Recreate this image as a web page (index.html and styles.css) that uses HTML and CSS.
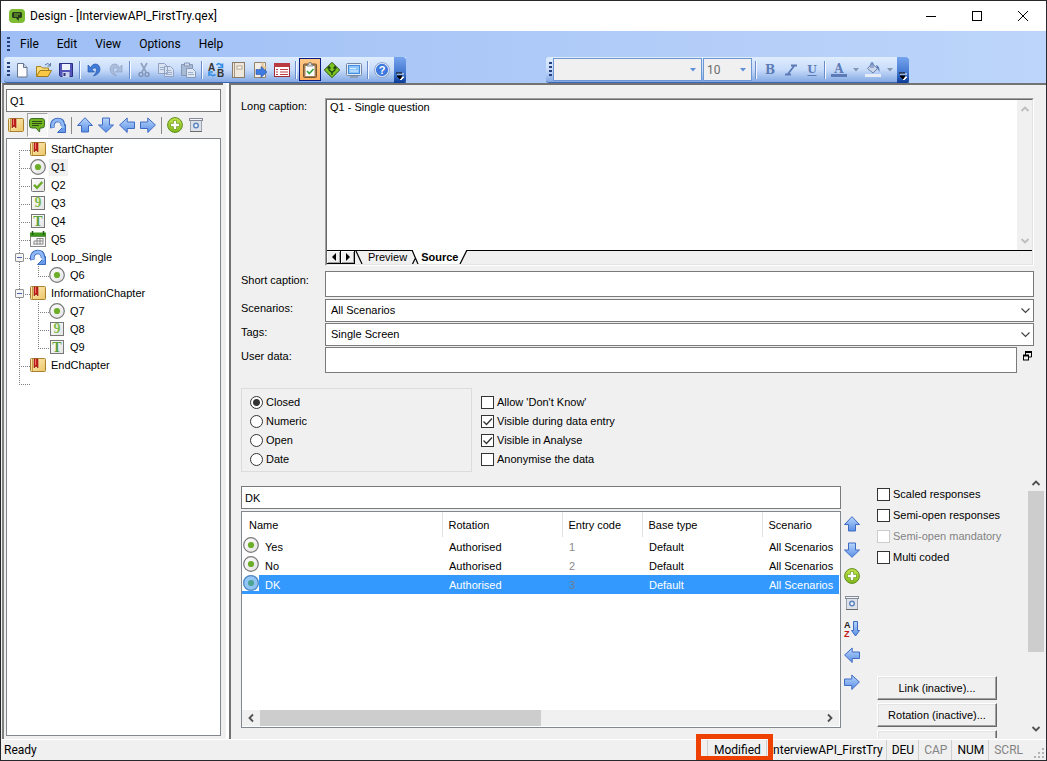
FILE: index.html
```html
<!DOCTYPE html>
<html lang="en">
<head>
<meta charset="utf-8">
<title>Design - [InterviewAPI_FirstTry.qex]</title>
<link rel="stylesheet" href="styles.css">
</head>
<body>
<svg class="defs" width="0" height="0" aria-hidden="true">
  <defs>
    <linearGradient id="gBlue" x1="0" y1="0" x2="0" y2="1"><stop offset="0" stop-color="#b9d6fb"/><stop offset="1" stop-color="#5a8fe6"/></linearGradient>
    <linearGradient id="gTan" x1="0" y1="0" x2="1" y2="1"><stop offset="0" stop-color="#fdf0c0"/><stop offset="1" stop-color="#ecc566"/></linearGradient>
    <linearGradient id="gGreen" x1="0" y1="0" x2="0" y2="1"><stop offset="0" stop-color="#c5e34e"/><stop offset="1" stop-color="#82b81c"/></linearGradient>
    <linearGradient id="gGray" x1="0" y1="0" x2="1" y2="1"><stop offset="0" stop-color="#ffffff"/><stop offset="1" stop-color="#e2e2e2"/></linearGradient>
  </defs>
  <symbol id="chapter" viewBox="0 0 16 16"><rect x=".5" y="1.500" width="15" height="13" rx="1" fill="url(#gTan)" stroke="#a9802f"/><path d="M2.500 2v12" stroke="#c99d45"/><path d="M4 2h4v9l-2-2-2 2z" fill="#c3201d" stroke="#8d1512" stroke-width=".6"/><path d="M5.500 2v6" stroke="#ee7a6a"/></symbol>
  <symbol id="bubble" viewBox="0 0 16 16"><path d="M3 1.500h10q2.500 0 2.500 2.500v4.500q0 2.500-2.500 2.500l-2 0-.5 4-3.500-4H3Q.5 11 .5 8.500V4Q.5 1.500 3 1.500z" fill="#6fb41f" stroke="#3f6d2a"/><path d="M3 4.500h10M3 6.500h10M3 8.500h7" stroke="#2e4d1b"/></symbol>
  <symbol id="loop" viewBox="0 0 16 16"><path d="M2.500 11C1.500 6 4 3 8 3c3.500 0 5 2.500 5 6" fill="none" stroke="#3b69bd" stroke-width="4.600"/><path d="M15.500 7.500v8H7.500z" fill="#6a9beb" stroke="#3b69bd" stroke-linejoin="round"/><path d="M2.600 10.500C1.600 6 4 3 8 3c3.500 0 5 2.500 5 8" fill="none" stroke="#8fb8f5" stroke-width="2.800"/></symbol>
  <symbol id="up" viewBox="0 0 16 16"><path d="M8 .7l7.500 7.800H11.500v6.500h-7V8.500H.5z" fill="url(#gBlue)" stroke="#3f6ac4" stroke-linejoin="round"/></symbol>
  <symbol id="down" viewBox="0 0 16 16"><path d="M8 15.300l7.500-7.300H11.500V1h-7v7H.5z" fill="url(#gBlue)" stroke="#3f6ac4" stroke-linejoin="round"/></symbol>
  <symbol id="left" viewBox="0 0 16 16"><path d="M.6 8l7.600-7v4h7.300v6.500H8.200v4z" fill="url(#gBlue)" stroke="#3f6ac4" stroke-linejoin="round"/></symbol>
  <symbol id="right" viewBox="0 0 16 16"><path d="M15.400 8l-7.600-7v4H.5v6.500h7.300v4z" fill="url(#gBlue)" stroke="#3f6ac4" stroke-linejoin="round"/></symbol>
  <symbol id="plus" viewBox="0 0 16 16"><circle cx="8" cy="8" r="7.400" fill="url(#gGreen)" stroke="#5d8d1d"/><path d="M8 3.500v9M3.500 8h9" stroke="#6d9c23" stroke-width="4"/><path d="M8 4v8M4 8h8" stroke="#fff" stroke-width="2.400"/></symbol>
  <symbol id="bin" viewBox="0 0 16 16"><path d="M2.500 3.500h11v11h-11z" fill="#dde1e9" stroke="#9da3ae"/><rect x="1.500" y="1.500" width="13" height="2" fill="#f4f5f8" stroke="#868c97"/><circle cx="8" cy="8.500" r="2.300" fill="#eef3fb" stroke="#5d83bd" stroke-width="1.400"/><path d="M2 14.500h12" stroke="#6b6b6b"/></symbol>
  <symbol id="single" viewBox="0 0 16 16"><circle cx="8" cy="8" r="7.300" fill="url(#gGray)" stroke="#777" stroke-width="1.200"/><circle cx="8" cy="8" r="3.100" fill="#6cae2a"/></symbol>
  <symbol id="multi" viewBox="0 0 16 16"><rect x="1.500" y="1.500" width="13" height="13" rx="1" fill="url(#gGray)" stroke="#777"/><path d="M4 7.800l3 3L12.300 5" fill="none" stroke="#69ab28" stroke-width="2.400"/></symbol>
  <symbol id="frame" viewBox="0 0 16 16"><rect x="1.500" y="1.500" width="13" height="13" fill="url(#gGray)" stroke="#777"/></symbol>
  <symbol id="date" viewBox="0 0 16 16"><rect x=".5" y="5.500" width="15" height="10" fill="#fafafa" stroke="#888"/><rect y="1.500" width="16" height="4" fill="#3e961d"/><path d="M2.500 0v4M13.500 0v4" stroke="#1e5f12" stroke-width="1.500"/><path d="M7 7.500h6M4 10h9M3.500 13h9.500M4 10v3.500M7 7v6.500M10 7v6.500M13 7v6.500" stroke="#888" fill="none"/></symbol>
  <symbol id="new" viewBox="0 0 16 16"><path d="M3.500 1.500h6l3.500 4v9.500h-9.500z" fill="#fdfdff" stroke="#66748f"/><path d="M9.500 1.500v4H13" fill="#cad6ec" stroke="#66748f"/></symbol>
  <symbol id="folder" viewBox="0 0 16 16"><path d="M9 3q3-3 5 0M14.500 1v3h-3" fill="none" stroke="#56789e"/><path d="M.5 14V4.500h4.500l1.500 1.500h6V9" fill="#f7dc7a" stroke="#ab8220"/><path d="M.5 14.500L4 8.500h11.500L12 14.500z" fill="#f9c846" stroke="#a3791b"/></symbol>
  <symbol id="save" viewBox="0 0 16 16"><path d="M1.500 1.500h13v13h-12l-1-1z" fill="#5254b8" stroke="#29307e"/><rect x="4" y="2" width="8" height="6" fill="#edf1fb"/><rect x="4.500" y="10" width="7" height="5" fill="#cbd2ee"/><rect x="5.500" y="11" width="2" height="3" fill="#30327a"/></symbol>
  <symbol id="undo" viewBox="0 0 16 16"><path d="M2 3v7h6.500L6 7.500Q10 4 10.500 8q0 3-3 6Q14 12 14 7 13.500 2 9 2 6.500 2 4.500 5.500z" fill="#3e7bd8" stroke="#285aac" stroke-width=".7"/></symbol>
  <symbol id="redo" viewBox="0 0 16 16"><path d="M14 3v7H7.500L10 7.500Q6 4 5.500 8q0 3 3 6Q2 12 2 7 2.500 2 7 2 9.500 2 11.500 5.500z" fill="#acbddb" stroke="#8da2c6" stroke-width=".7"/></symbol>
  <symbol id="cut" viewBox="0 0 16 16"><path d="M5 1l5 9M11 1L6 10" stroke="#8d9fbd" stroke-width="1.600"/><circle cx="5" cy="12.500" r="2" fill="none" stroke="#8497bb" stroke-width="1.500"/><circle cx="11" cy="12.500" r="2" fill="none" stroke="#8497bb" stroke-width="1.500"/></symbol>
  <symbol id="copy" viewBox="0 0 16 16"><path d="M.5 1.500h6l3 3v7h-9zM6.500 4.500h6l3 3v7h-9z" fill="#d8e2f2" stroke="#90a2c0"/><path d="M2 5.500h4M2 7.500h4M8 8.500h5M8 10.500h6M8 12.500h6" stroke="#9eafca"/></symbol>
  <symbol id="paste" viewBox="0 0 16 16"><path d="M1.500 2.500h11v11h-11z" fill="#a9bad4" stroke="#8597b6"/><path d="M4.500 1h5v3h-5z" fill="#d1dbea" stroke="#8597b6"/><path d="M6.500 6.500h6l3 3v6h-9z" fill="#e0e8f4" stroke="#8699b9"/><path d="M8 10.500h5M8 12.500h6" stroke="#9eafca"/></symbol>
  <symbol id="swap" viewBox="0 0 16 16"><path d="M8.500 3q3-3 5 1M14.500 1.500v4H10M7.500 12.500q-4 2.500-5-1M1 14v-4h4" fill="none" stroke="#368ee4" stroke-width="1.700"/></symbol>
  <symbol id="book" viewBox="0 0 16 16"><rect x="2.500" y=".5" width="12" height="15" fill="#eee8dc" stroke="#8b7a68"/><path d="M4.500 1v14" stroke="#a89884"/><rect x="7" y="4" width="5" height="3" fill="#fff" stroke="#b7a48c"/></symbol>
  <symbol id="export" viewBox="0 0 16 16"><path d="M2.500 .5h11v15h-11z" fill="#f3efe7" stroke="#93836d"/><path d="M10.500 .5v5h4" fill="none" stroke="#e1c28d" stroke-width="2"/><path d="M4 7.500h5V4.500l6 5.500-6 5.500v-3H4z" fill="#3d7be0" stroke="#2c55a4" stroke-width=".6"/></symbol>
  <symbol id="form" viewBox="0 0 16 16"><rect x=".5" y="1.500" width="15" height="13" fill="#fff" stroke="#a02b31"/><rect y="1" width="16" height="4" fill="#b93b40"/><path d="M2 7.500h2M6 7.500h8M2 10h2M6 10h8M2 12.500h2M6 12.500h8" stroke="#bc4146"/></symbol>
  <symbol id="clip" viewBox="0 0 16 16"><rect x="1.500" y="2" width="13" height="13.500" rx="1" fill="#a87f50" stroke="#725637"/><rect x="3.500" y="4" width="9" height="10" fill="#fff"/><path d="M5 4V2.500h1.500L7 .5h2l.5 2H11V4z" fill="#ddd" stroke="#666" stroke-width=".7"/><path d="M5 9l2.300 2.500L11.500 7" fill="none" stroke="#38a544" stroke-width="1.700"/></symbol>
  <symbol id="route" viewBox="0 0 16 16"><path d="M8 .3L15.700 8 8 15.700.3 8z" fill="#7cc51e" stroke="#34511b"/><path d="M8 13V10.500L5 8V5M8 10.500L11 8V5M3.500 6.500L5 4.500l1.500 2M9.500 6.500l1.500-2 1.500 2" fill="none" stroke="#1e3d13" stroke-width="1.200"/></symbol>
  <symbol id="screen" viewBox="0 0 16 16"><rect x=".5" y="1.500" width="15" height="12" rx="1" fill="#e3edf9" stroke="#75869e"/><rect x="2.500" y="3.500" width="11" height="8" fill="#8cc5fa" stroke="#438bdd"/><path d="M4 6.500h6M4 9h8" stroke="#d8edff"/><path d="M4 15h8" stroke="#8795a8" stroke-width="1.500"/></symbol>
  <symbol id="sup" viewBox="0 0 10 10"><path d="M1.500 7L5 3.500 8.500 7" fill="none" stroke="currentColor" stroke-width="1.800"/></symbol>
  <symbol id="sdown" viewBox="0 0 10 10"><path d="M1.500 3L5 6.500 8.500 3" fill="none" stroke="currentColor" stroke-width="1.800"/></symbol>
  <symbol id="sleft" viewBox="0 0 10 10"><path d="M7 1.500L3.500 5 7 8.500" fill="none" stroke="currentColor" stroke-width="1.800"/></symbol>
  <symbol id="sright" viewBox="0 0 10 10"><path d="M3 1.500L6.500 5 3 8.500" fill="none" stroke="currentColor" stroke-width="1.800"/></symbol>
  <symbol id="more" viewBox="0 0 8 8"><path d="M1 2h7M2 5h6L5 8z" stroke="#fff" fill="#fff"/><path d="M0 1h6M1 4h5L4 7z" stroke="#000" stroke-width="1" fill="#000"/></symbol>
  <symbol id="caret" viewBox="0 0 6 4"><path d="M0 0h6L3 3.500z" fill="currentColor"/></symbol>
  <symbol id="italic" viewBox="0 0 16 16"><path d="M8 3.500h6M2 12.500h6M11.500 3.500l-7 9" stroke="#5c7ab5" stroke-width="1.800"/></symbol>
  <symbol id="fill" viewBox="0 0 16 16"><path d="M7 1.500l5.500 5L8 11 2.500 6.500z" fill="#cbd6ea" stroke="#6b7fae"/><path d="M6 6V1q1-1 2 0v5" fill="none" stroke="#5c7ab5"/><path d="M11 3q4 1 3.500 7L12 6z" fill="#5c7ab5"/><rect y="12" width="16" height="3" fill="#e8ecf6"/></symbol>
</svg>

<div class="window">
  <header class="titlebar">
    <svg class="logo" viewBox="0 0 16 16"><rect width="16" height="14" y="1" rx="4" fill="#7dbb33"/><path d="M4.500 4h7q1.500 0 1.500 1.500v3Q13 10 11.500 10H10l-.5 3L7 10H4.500Q3 10 3 8.500v-3Q3 4 4.500 4z" fill="#273a1d"/><path d="M5 6h6M5 8h4" stroke="#7dbb33"/></svg>
    <h1 class="title">Design - [InterviewAPI_FirstTry.qex]</h1>
    <button class="winbtn" aria-label="Minimize"><svg viewBox="0 0 12 12"><path d="M1 6.500h10" stroke="#000"/></svg></button>
    <button class="winbtn" aria-label="Maximize"><svg viewBox="0 0 12 12"><rect x="1.500" y="1.500" width="9" height="9" fill="none" stroke="#000"/></svg></button>
    <button class="winbtn" aria-label="Close"><svg viewBox="0 0 12 12"><path d="M1 1l10 10M11 1L1 11" stroke="#000"/></svg></button>
  </header>

  <div class="bars">
    <nav class="menubar">
      <span class="grip"></span>
      <button class="menu">File</button><button class="menu">Edit</button><button class="menu">View</button><button class="menu">Options</button><button class="menu">Help</button>
    </nav>
    <div class="toolbars">
      <div class="toolbar" role="toolbar" aria-label="Standard">
        <span class="grip"></span>
        <button class="tool" aria-label="New"><svg class="icon"><use href="#new"/></svg></button>
        <button class="tool" aria-label="Open"><svg class="icon"><use href="#folder"/></svg></button>
        <button class="tool" aria-label="Save"><svg class="icon"><use href="#save"/></svg></button>
        <span class="sep"></span>
        <button class="tool" aria-label="Undo"><svg class="icon"><use href="#undo"/></svg></button>
        <button class="tool" aria-label="Redo" disabled><svg class="icon"><use href="#redo"/></svg></button>
        <span class="sep"></span>
        <button class="tool" aria-label="Cut" disabled><svg class="icon"><use href="#cut"/></svg></button>
        <button class="tool" aria-label="Copy" disabled><svg class="icon"><use href="#copy"/></svg></button>
        <button class="tool" aria-label="Paste" disabled><svg class="icon"><use href="#paste"/></svg></button>
        <span class="sep"></span>
        <button class="tool" aria-label="Translate"><svg class="icon" viewBox="0 0 16 16"><text x="0" y="9" class="ab">A</text><text x="9" y="15" class="ab">B</text><use href="#swap" width="16" height="16"/></svg></button>
        <button class="tool" aria-label="Book"><svg class="icon"><use href="#book"/></svg></button>
        <button class="tool" aria-label="Export"><svg class="icon"><use href="#export"/></svg></button>
        <button class="tool" aria-label="Form"><svg class="icon"><use href="#form"/></svg></button>
        <span class="sep"></span>
        <button class="tool tool-on" aria-label="Design"><svg class="icon"><use href="#clip"/></svg></button>
        <button class="tool" aria-label="Routing"><svg class="icon"><use href="#route"/></svg></button>
        <button class="tool" aria-label="Screen"><svg class="icon"><use href="#screen"/></svg></button>
        <span class="sep"></span>
        <button class="tool" aria-label="Help"><svg class="icon" viewBox="0 0 16 16"><circle cx="8" cy="8" r="6.800" fill="#3d78df" stroke="#dfe9fa" stroke-width="1.300"/><circle cx="8" cy="8" r="7.500" fill="none" stroke="#7f97c4" stroke-width=".8"/><text x="8" y="12" text-anchor="middle" class="q">?</text></svg></button>
        <button class="cap" aria-label="More buttons"><svg><use href="#more"/></svg></button>
      </div>
      <div class="toolbar toolbar-format" role="toolbar" aria-label="Format">
        <span class="grip"></span>
        <select class="combo combo-font" aria-label="Font" disabled><option></option></select>
        <select class="combo combo-size" aria-label="Size" disabled><option>10</option></select>
        <span class="sep"></span>
        <button class="tool" aria-label="Bold" disabled><svg class="icon" viewBox="0 0 16 16"><text x="8" y="12" text-anchor="middle" class="fmt">B</text></svg></button>
        <button class="tool" aria-label="Italic" disabled><svg class="icon"><use href="#italic"/></svg></button>
        <button class="tool" aria-label="Underline" disabled><svg class="icon" viewBox="0 0 16 16"><text x="8" y="11" text-anchor="middle" class="fmt fmt-u">U</text><path d="M3.500 13.500h9" stroke="#5c7ab5"/></svg></button>
        <span class="sep"></span>
        <button class="tool tool-split" aria-label="Text colour" disabled><svg class="icon" viewBox="0 0 16 16"><text x="8" y="11" text-anchor="middle" class="fmt">A</text><rect y="12" width="16" height="3" fill="#5c7ab5"/></svg><svg class="caret"><use href="#caret"/></svg></button>
        <button class="tool tool-split" aria-label="Fill colour" disabled><svg class="icon"><use href="#fill"/></svg><svg class="caret"><use href="#caret"/></svg></button>
        <button class="cap" aria-label="More buttons"><svg><use href="#more"/></svg></button>
      </div>
    </div>
  </div>

  <main class="main">
    <aside class="sidebar">
      <input class="box box-name" type="text" value="Q1" aria-label="Question name">
      <div class="treebar" role="toolbar" aria-label="Tree">
        <button class="tbtn" aria-label="Add chapter"><svg class="icon"><use href="#chapter"/></svg></button>
        <button class="tbtn tbtn-on" aria-label="Add question"><svg class="icon"><use href="#bubble"/></svg></button>
        <button class="tbtn" aria-label="Add loop"><svg class="icon"><use href="#loop"/></svg></button>
        <span class="tsep"></span>
        <button class="tbtn" aria-label="Move up"><svg class="icon"><use href="#up"/></svg></button>
        <button class="tbtn" aria-label="Move down"><svg class="icon"><use href="#down"/></svg></button>
        <button class="tbtn" aria-label="Move left"><svg class="icon"><use href="#left"/></svg></button>
        <button class="tbtn" aria-label="Move right"><svg class="icon"><use href="#right"/></svg></button>
        <span class="tsep"></span>
        <button class="tbtn" aria-label="Add"><svg class="icon"><use href="#plus"/></svg></button>
        <button class="tbtn" aria-label="Delete"><svg class="icon"><use href="#bin"/></svg></button>
      </div>
      <ul class="tree">
        <li class="node node-first"><div class="row"><span class="stub"></span><svg class="icon"><use href="#chapter"/></svg><span class="name">StartChapter</span></div></li>
        <li class="node"><div class="row"><span class="stub"></span><svg class="icon"><use href="#single"/></svg><span class="name name-on">Q1</span></div></li>
        <li class="node"><div class="row"><span class="stub"></span><svg class="icon"><use href="#multi"/></svg><span class="name">Q2</span></div></li>
        <li class="node"><div class="row"><span class="stub"></span><svg class="icon" viewBox="0 0 16 16"><use href="#frame" width="16" height="16"/><text x="8" y="12" text-anchor="middle" class="glyph">9</text></svg><span class="name">Q3</span></div></li>
        <li class="node"><div class="row"><span class="stub"></span><svg class="icon" viewBox="0 0 16 16"><use href="#frame" width="16" height="16"/><text x="8" y="13" text-anchor="middle" class="glyph glyph-dark">T</text></svg><span class="name">Q4</span></div></li>
        <li class="node"><div class="row"><span class="stub"></span><svg class="icon"><use href="#date"/></svg><span class="name">Q5</span></div></li>
        <li class="node"><div class="row"><span class="stub"><button class="toggle" aria-label="Collapse"></button></span><svg class="icon"><use href="#loop"/></svg><span class="name">Loop_Single</span></div>
          <ul class="branch">
            <li class="node node-last"><div class="row"><span class="stub"></span><svg class="icon"><use href="#single"/></svg><span class="name">Q6</span></div></li>
          </ul></li>
        <li class="node"><div class="row"><span class="stub"><button class="toggle" aria-label="Collapse"></button></span><svg class="icon"><use href="#chapter"/></svg><span class="name">InformationChapter</span></div>
          <ul class="branch">
            <li class="node"><div class="row"><span class="stub"></span><svg class="icon"><use href="#single"/></svg><span class="name">Q7</span></div></li>
            <li class="node"><div class="row"><span class="stub"></span><svg class="icon" viewBox="0 0 16 16"><use href="#frame" width="16" height="16"/><text x="8" y="12" text-anchor="middle" class="glyph">9</text></svg><span class="name">Q8</span></div></li>
            <li class="node node-last"><div class="row"><span class="stub"></span><svg class="icon" viewBox="0 0 16 16"><use href="#frame" width="16" height="16"/><text x="8" y="13" text-anchor="middle" class="glyph glyph-dark">T</text></svg><span class="name">Q9</span></div></li>
          </ul></li>
        <li class="node"><div class="row"><span class="stub"></span><svg class="icon"><use href="#chapter"/></svg><span class="name">EndChapter</span></div></li>
        <li class="node node-last"><div class="row"></div></li>
      </ul>
    </aside>

    <section class="detail">
      <div class="fields">
        <label class="lab lab-long" for="long">Long caption:</label>
        <div class="editor"><div class="editor-in">
          <div class="editor-body">
            <textarea id="long" class="source" spellcheck="false">Q1 - Single question</textarea>
            <div class="vbar vbar-off"><svg><use href="#sup"/></svg><svg><use href="#sdown"/></svg></div>
          </div>
          <div class="tabs">
            <button class="tabnav" aria-label="Previous tab"><svg viewBox="0 0 8 8"><path d="M6 0v8L2 4z"/></svg></button><button class="tabnav" aria-label="Next tab"><svg viewBox="0 0 8 8"><path d="M2 0v8l4-4z"/></svg></button>
            <svg class="edge" viewBox="0 0 9 13"><path d="M1 0l6 13" stroke="#000" stroke-width="1.200"/></svg>
            <button class="tab">Preview</button>
            <svg class="edge edge-on" viewBox="0 0 9 14"><path d="M1 0h8v14H7z" fill="#fff"/><path d="M1 0l6 14M4.500 8l-3 6" stroke="#000" stroke-width="1.200"/></svg>
            <button class="tab tab-on">Source</button>
            <svg class="edge edge-on" viewBox="0 0 9 14"><path d="M0 0h8L1 14H0z" fill="#fff"/><path d="M8 0L1 14" stroke="#000" stroke-width="1.200"/></svg>
          </div>
        </div></div>
        <label class="lab" for="short">Short caption:</label>
        <input id="short" class="box box-tall" type="text">
        <label class="lab" for="scen">Scenarios:</label>
        <select id="scen" class="box pick"><option>All Scenarios</option></select>
        <label class="lab" for="tags">Tags:</label>
        <select id="tags" class="box pick"><option>Single Screen</option></select>
        <label class="lab" for="user">User data:</label>
        <div class="userline">
          <input id="user" class="box box-tall" type="text">
          <button class="popout" aria-label="Expand"><svg viewBox="0 0 9 10"><path d="M2.500 4V1h6v5H6" fill="none" stroke="#000"/><path d="M2 1h7" stroke="#000" stroke-width="2"/><rect x=".5" y="4.500" width="5" height="4.500" fill="#f0f0f0" stroke="#000"/><path d="M0 4.500h6" stroke="#000" stroke-width="2"/></svg></button>
        </div>
      </div>

      <div class="options">
        <fieldset class="group">
          <label class="opt"><input class="radio" type="radio" name="kind" checked>Closed</label>
          <label class="opt"><input class="radio" type="radio" name="kind">Numeric</label>
          <label class="opt"><input class="radio" type="radio" name="kind">Open</label>
          <label class="opt"><input class="radio" type="radio" name="kind">Date</label>
        </fieldset>
        <div class="flags">
          <label class="opt"><input class="check" type="checkbox">Allow 'Don't Know'</label>
          <label class="opt"><input class="check" type="checkbox" checked>Visible during data entry</label>
          <label class="opt"><input class="check" type="checkbox" checked>Visible in Analyse</label>
          <label class="opt"><input class="check" type="checkbox">Anonymise the data</label>
        </div>
      </div>

      <div class="lower">
        <div class="answers">
          <input class="box box-name" type="text" value="DK" aria-label="Response name">
          <div class="list">
            <table class="grid">
              <thead><tr><th class="c-name">Name</th><th class="c-rot">Rotation</th><th class="c-code">Entry code</th><th class="c-base">Base type</th><th>Scenario</th></tr></thead>
              <tbody>
                <tr><td class="first"><div class="cell"><svg class="icon"><use href="#single"/></svg><span class="cell-text">Yes</span></div></td><td>Authorised</td><td class="code">1</td><td>Default</td><td>All Scenarios</td></tr>
                <tr><td class="first"><div class="cell"><svg class="icon"><use href="#single"/></svg><span class="cell-text">No</span></div></td><td>Authorised</td><td class="code">2</td><td>Default</td><td>All Scenarios</td></tr>
                <tr class="sel"><td class="first"><div class="cell"><span class="tint"><svg class="icon"><use href="#single"/></svg></span><span class="cell-text">DK</span></div></td><td>Authorised</td><td class="code">3</td><td>Default</td><td>All Scenarios</td></tr>
              </tbody>
            </table>
            <div class="hbar"><svg><use href="#sleft"/></svg><div class="htrack"><div class="hthumb"></div></div><svg><use href="#sright"/></svg></div>
          </div>
        </div>
        <div class="side" role="toolbar" aria-label="Responses">
          <button class="sbtn" aria-label="Move up"><svg class="icon"><use href="#up"/></svg></button>
          <button class="sbtn" aria-label="Move down"><svg class="icon"><use href="#down"/></svg></button>
          <button class="sbtn" aria-label="Add"><svg class="icon"><use href="#plus"/></svg></button>
          <button class="sbtn" aria-label="Delete"><svg class="icon"><use href="#bin"/></svg></button>
          <button class="sbtn" aria-label="Sort"><svg class="icon" viewBox="0 0 16 16"><text x="0" y="7" class="az">A</text><text x="0" y="16" class="az az-red">Z</text><path d="M9.500 .5h4v9h2l-4 5.500-4-5.500h2z" fill="url(#gBlue)" stroke="#3f6ac4"/></svg></button>
          <button class="sbtn" aria-label="Previous"><svg class="icon"><use href="#left"/></svg></button>
          <button class="sbtn" aria-label="Next"><svg class="icon"><use href="#right"/></svg></button>
        </div>
        <div class="extras">
          <label class="opt opt-wide"><input class="check" type="checkbox">Scaled responses</label>
          <label class="opt opt-wide"><input class="check" type="checkbox">Semi-open responses</label>
          <label class="opt opt-wide opt-off"><input class="check" type="checkbox" disabled>Semi-open mandatory</label>
          <label class="opt opt-wide"><input class="check" type="checkbox">Multi coded</label>
          <div class="actions">
            <button class="push">Link (inactive)...</button>
            <button class="push">Rotation (inactive)...</button>
            <button class="push" aria-label="More"></button>
          </div>
        </div>
        <div class="vbar"><svg><use href="#sup"/></svg><div class="vtrack"><div class="vthumb"></div></div><svg><use href="#sdown"/></svg></div>
      </div>
    </section>
  </main>

  <footer class="status">
    <span class="ready">Ready</span>
    <span class="seg seg-mod">Modified<span class="mark"></span></span>
    <span class="seg seg-file">InterviewAPI_FirstTry</span>
    <span class="seg">DEU</span>
    <span class="seg seg-dim">CAP</span>
    <span class="seg">NUM</span>
    <span class="seg seg-dim">SCRL</span>
    <svg class="sizer" viewBox="0 0 10 10"><path d="M8 0h2v2H8zM4 4h2v2H4zM8 4h2v2H8zM0 8h2v2H0zM4 8h2v2H4zM8 8h2v2H8z" fill="#b4b4b4"/></svg>
  </footer>
</div>
</body>
</html>
```
FILE: styles.css
```css
* { box-sizing: border-box; }
html, body { height: 100%; margin: 0; }
body {
  font: 11px/13px "Liberation Sans", Arial, sans-serif;
  color: #000;
  background: #f0f0f0;
}
button, input, select, textarea { font: inherit; color: inherit; margin: 0; }
button { padding: 0; border: 0; background: none; }
svg { display: block; flex: none; }
.defs { position: absolute; }
.icon { width: 16px; height: 16px; }

.glyph { font: bold 14px "Liberation Serif", serif; fill: #7fba48; }
.glyph-dark { fill: #5a9e3a; }
.az { font: bold 9px "Liberation Sans", sans-serif; fill: #222; }
.az-red { fill: #c01616; }
.ab { font: bold 10px "Liberation Sans", sans-serif; fill: #333; }
.q { font: bold 11px "Liberation Sans", sans-serif; fill: #fff; }
.fmt { font: bold 12px "DejaVu Serif", serif; fill: #5c7ab5; }
.fmt-u { font-size: 11px; }

.window {
  display: flex;
  flex-direction: column;
  height: 100vh;
  min-height: 600px;
  border: 1px solid #26282c;
  overflow: hidden;
}

/* title bar */
.titlebar {
  display: flex;
  align-items: center;
  height: 30px;
  padding-left: 8px;
  background: #fff;
  flex: none;
}
.logo { width: 16px; height: 16px; }
.title {
  flex: 1;
  margin: 0 0 0 5px;
  font: 12px/16px Roboto, "Noto Sans", sans-serif;
}
.winbtn { width: 46px; height: 30px; display: flex; align-items: center; justify-content: center; }
.winbtn svg { width: 12px; height: 12px; }

/* menu and toolbars */
.bars { flex: none; background: linear-gradient(to right, #9ebef5, #bdd5fa); }
.menubar { display: flex; align-items: center; height: 26px; padding-left: 6px; }
.menu { padding: 0 9px; font: 12px/16px Roboto, "Noto Sans", sans-serif; }
.grip {
  width: 3px;
  height: 15px;
  flex: none;
  background: repeating-linear-gradient(to bottom, #27417f 0 2px, transparent 2px 4px);
}
.menubar .grip { margin-right: 1px; }
.toolbars { display: flex; gap: 140px; height: 26px; padding-left: 3px; }
.toolbar {
  display: flex;
  align-items: center;
  height: 26px;
  padding-left: 3px;
  border-bottom: 1px solid #3a66b4;
  border-radius: 3px 0 0 3px;
  background: linear-gradient(#e0edfe, #c8dcfa 50%, #83a9e3);
}
.toolbar .grip { margin-right: 1px; }
.tool { width: 22px; height: 23px; display: flex; align-items: center; justify-content: center; }
.toolbar-format .tool { width: 21px; }
.toolbar-format .tool-split { width: 34px; gap: 6px; }
.tool-on { border: 1px solid #0a1a80; background: linear-gradient(#ffc887, #ffae5c); }
.caret { width: 6px; height: 4px; color: #8795ae; }
.sep { width: 2px; height: 18px; margin: 0 2px; background: linear-gradient(to right, #6a8ccb 50%, #f4f8ff 50%); }
.cap {
  display: flex;
  align-items: flex-end;
  justify-content: center;
  align-self: stretch;
  width: 12px;
  margin: 0 0 -1px 1px;
  padding-bottom: 3px;
  border-radius: 0 3px 3px 0;
  background: linear-gradient(#76a4ee, #4378d0 60%, #0a3a96);
}
.cap svg { width: 8px; height: 8px; }
.combo {
  appearance: none;
  height: 23px;
  padding: 0 3px;
  border: 1px solid #6d97d4;
  border-radius: 0;
  background: #f0f0f0 url("data:image/svg+xml,%3Csvg xmlns='http://www.w3.org/2000/svg' width='6' height='4'%3E%3Cpath d='M0 0h6L3 3.500z' fill='%235f8fd8'/%3E%3C/svg%3E") no-repeat right 5px center;
  font: 12px/16px Roboto, "Noto Sans", sans-serif;
  color: #6d6d6d;
  opacity: 1;
}
.combo-font { width: 149px; margin-right: 1px; }
.combo-size { width: 49px; margin-right: 1px; }

/* panels */
.main { display: flex; flex: 1; min-height: 0; gap: 6px; padding-left: 1px; }
.sidebar {
  display: flex;
  flex-direction: column;
  width: 221px;
  flex: none;
  padding: 4px 2px 3px;
  border: solid #808080;
  border-width: 2px 0 0 2px;
  border-top-color: #696969;
}
.detail {
  display: flex;
  flex-direction: column;
  flex: 1;
  min-width: 0;
  border: solid #737373;
  border-width: 2px 0 0 2px;
  box-shadow: -3px 0 0 #fff;
}
.box {
  width: 100%;
  border: 1px solid #7a7a7a;
  border-radius: 0;
  background-color: #fff;
  padding: 0 3px;
  outline: 0;
}
.box-name { height: 23px; flex: none; }
.box-tall { height: 26px; }

.treebar { display: flex; align-items: center; height: 26px; flex: none; }
.tbtn { width: 21px; height: 24px; padding-left: 2px; display: flex; align-items: center; }
.tbtn-on { padding-left: 1px; border: 1px solid; border-color: #a0a0a0 #fff #fff #a0a0a0; background: #f6f6f6; }
.tsep { width: 1px; height: 17px; margin: 0 3px 0 2px; background: #8a8a8a; }

.tree {
  flex: 1;
  min-height: 0;
  margin: 0;
  padding: 1px 0 0;
  list-style: none;
  border: 1px solid #828790;
  background: #fff;
}
.branch { margin: 0; padding: 0 0 0 19px; list-style: none; }
.node {
  background:
    repeating-linear-gradient(to bottom, #808080 0 1px, transparent 1px 2px) 12px 0 / 1px 100% no-repeat,
    repeating-linear-gradient(to right, #808080 0 1px, transparent 1px 2px) 12px 10px / 11px 1px no-repeat;
}
.node-first { background-position: 12px 10px, 12px 10px; }
.node-last { background-size: 1px 10px, 11px 1px; }
.row { display: flex; align-items: center; height: 18px; }
.stub { width: 23px; flex: none; padding-left: 8px; }
.toggle {
  display: block;
  width: 9px;
  height: 9px;
  border: 1px solid #919191;
  border-radius: 1px;
  background: linear-gradient(#4b63a7, #4b63a7) center / 5px 1px no-repeat, #f4f4f4;
}
.name { margin-left: 3px; padding: 2px; }
.name-on { background: #f0f0f0; }

/* question fields */
.fields {
  display: grid;
  grid-template-columns: 84px 1fr;
  row-gap: 1px;
  padding: 13px 12px 0 10px;
}
.lab { padding-top: 3px; }
.lab-long { padding-top: 2px; }
.editor { margin-bottom: 4px; border: 1px solid; border-color: #a0a0a0 #fff #fff #a0a0a0; }
.editor-in { border: 1px solid; border-color: #696969 #e3e3e3 #e3e3e3 #696969; }
.editor-body { display: flex; height: 150px; }
.source {
  flex: 1;
  min-width: 0;
  border: 0;
  padding: 1px 3px;
  resize: none;
  outline: 0;
  overflow: hidden;
  background: #fff;
}
.vbar {
  display: flex;
  flex-direction: column;
  align-items: center;
  justify-content: space-between;
  width: 15px;
  flex: none;
  padding: 4px 0;
  background: #f0f0f0;
  color: #505050;
}
.vbar svg, .hbar svg { width: 10px; height: 10px; }
.vbar-off { color: #bdbdbd; }
.tabs { display: flex; height: 14px; border-top: 1px solid #000; }
.tabnav {
  display: flex;
  align-items: center;
  justify-content: center;
  width: 14px;
  border: solid #000;
  border-width: 0 1px 1px 0;
  box-shadow: inset 1px 1px #fff, inset -1px -1px #a0a0a0;
}
.tabnav svg { width: 8px; height: 8px; }
.edge { width: 9px; height: 13px; }
.edge-on { height: 14px; margin-top: -1px; }
.tab { padding: 0 4px; }
.tab-on { margin-top: -1px; padding: 1px 1px 0; background: #fff; font-weight: bold; }
.pick {
  appearance: none;
  height: 23px;
  padding: 0 5px;
  background: #fff url("data:image/svg+xml,%3Csvg xmlns='http://www.w3.org/2000/svg' width='9' height='6'%3E%3Cpath d='M.5 .5l4 4 4-4' fill='none' stroke='%23444' stroke-width='1.200'/%3E%3C/svg%3E") no-repeat right 3px center;
}
#short { margin-bottom: 1px; }
.userline { display: flex; align-items: flex-start; }
.userline .box { flex: 1; min-width: 0; }
.popout { width: 17px; padding: 4px 2px 0 6px; }
.popout svg { width: 9px; height: 10px; }

.options { display: flex; gap: 9px; padding: 15px 10px 0; }
.group { width: 231px; margin: 0; padding: 4px 8px 2px; border: 1px solid #dcdcdc; }
.flags { padding-top: 5px; }
.opt { display: flex; align-items: center; height: 19px; gap: 3px; }
.radio, .check { appearance: none; width: 13px; height: 13px; flex: none; border: 1px solid #333; background: #fff; }
.radio { border-radius: 50%; }
.radio:checked { background: radial-gradient(circle, #333 0 3px, #fff 4px); }
.check:checked { background: #fff url("data:image/svg+xml,%3Csvg xmlns='http://www.w3.org/2000/svg' width='11' height='11'%3E%3Cpath d='M1.500 5.500l3 3 5.500-6' fill='none' stroke='%23333' stroke-width='1.300'/%3E%3C/svg%3E") center no-repeat; }
.opt-wide { height: 20px; margin-bottom: 1px; }
.opt-off { color: #838383; }
.check:disabled { border-color: #ccc; }

/* responses */
.lower { display: flex; flex: 1; min-height: 0; padding: 2px 2px 1px 10px; }
.answers { display: flex; flex-direction: column; flex: 1; min-width: 0; gap: 2px; padding: 12px 0 10px; }
.list { display: flex; flex-direction: column; flex: 1; min-height: 0; padding: 0 1px 1px 0; border: 1px solid #828790; background: #fff; overflow: hidden; }
.grid { width: 100%; table-layout: fixed; border-collapse: collapse; }
.grid th { height: 25px; padding: 2px 0 0 6px; text-align: left; font-weight: normal; border-left: 1px solid #e2e2e2; }
.grid .c-name { width: 200px; padding-left: 7px; border-left: 0; }
.c-rot { width: 120px; }
.c-code { width: 80px; }
.c-base { width: 120px; }
.grid td { height: 19px; padding: 2px 0 0 7px; white-space: nowrap; }
.grid .first { padding: 0 0 0 1px; }
.cell { display: flex; align-items: flex-start; gap: 6px; height: 19px; }
.cell-text { padding-top: 4px; }
.code { color: #8a8a8a; }
.sel { background: #3399ff; color: #fff; }
.sel .code { color: #6f7d90; }
.sel .first { background: linear-gradient(#fff, #fff) 0 0 / 17px 16px no-repeat; }
.tint { border-radius: 50%; background: #3399ff; }
.tint .icon { opacity: .5; }
.hbar { display: flex; align-items: center; gap: 4px; height: 16px; margin-top: auto; padding: 0 4px; background: #f0f0f0; color: #505050; }
.htrack { flex: 1; align-self: stretch; }
.hthumb { width: 50%; height: 16px; background: #cdcdcd; }

.side { display: flex; flex-direction: column; gap: 1px; padding: 37px 0 0 3px; }
.sbtn { width: 17px; height: 25px; display: flex; align-items: center; }
.sbtn:nth-child(3n) { margin-bottom: 1px; }
.extras { display: flex; flex-direction: column; width: 167px; flex: none; padding-left: 16px; padding-top: 10px; }
.actions { display: flex; flex-direction: column; gap: 3px; width: 120px; height: 62px; margin-top: auto; overflow: hidden; }
.push {
  height: 24px;
  flex: none;
  border: 1px solid;
  border-color: #fff #696969 #696969 #fff;
  box-shadow: inset -1px -1px #a0a0a0, inset 1px 1px #e3e3e3;
}
.lower .vbar { width: 16px; }
.vtrack { flex: 1; align-self: stretch; padding: 3px 0; }
.vthumb { height: 70%; background: #cdcdcd; }

/* status bar */
.status {
  display: flex;
  align-items: stretch;
  height: 21px;
  flex: none;
  padding-left: 3px;
  border-top: 1px solid #fff;
  font: 12px/21px Roboto, "Noto Sans", sans-serif;
}
.ready { flex: 1; }
.seg { padding: 0 4px 0 5px; border-left: 1px solid #d0d0d0; }
.seg-mod { position: relative; padding: 0 5px 0 6px; }
.seg-file { padding: 0 3px; }
.seg-dim { color: #838383; }
.mark {
  position: absolute;
  top: -6px;
  right: -7px;
  bottom: -1px;
  left: -12px;
  border: 5px solid #ee4000;
}
.sizer { width: 10px; height: 10px; margin: 8px 2px 0 7px; }
```
